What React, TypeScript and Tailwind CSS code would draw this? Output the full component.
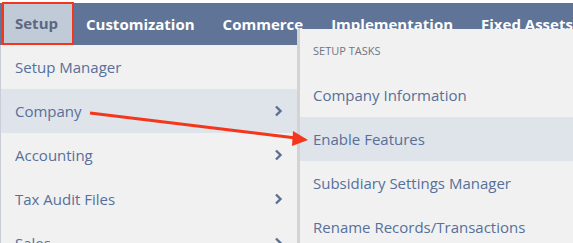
const font = { fontFamily: '"Open Sans", "Noto Sans", sans-serif' };

const NAV = ["Customization", "Commerce", "Implementation", "Fixed Assets"];
const LEFT = [
  { label: "Setup Manager", sub: false },
  { label: "Company", sub: true, active: true },
  { label: "Accounting", sub: true },
  { label: "Tax Audit Files", sub: true },
  { label: "Sales", sub: true },
];
const RIGHT = [
  { label: "Company Information" },
  { label: "Enable Features", active: true },
  { label: "Subsidiary Settings Manager" },
  { label: "Rename Records/Transactions" },
];

function Chevron() {
  return (
    <svg width="9" height="12" viewBox="0 0 9 12" className="flex-none">
      <polyline points="2,1.5 6.5,6 2,10.5" fill="none" stroke="#5b6f93" strokeWidth="2.4" />
    </svg>
  );
}

export default function App() {
  return (
    <div className="relative h-[243px] w-[573px] overflow-hidden bg-white" style={font}>
      {/* barra superior */}
      <div className="mt-[3px] flex h-[42px] items-stretch bg-[#5f7497]">
        <div className="ml-[2px] -mt-[1px] flex w-[72px] items-center border-2 border-[#f4361c] bg-[#c1cad7] pl-[11px] text-[15px] font-bold text-[#5c6781]">
          Setup
        </div>
        <div className="flex items-center gap-[28px] pl-[12px] text-[15px] font-bold text-white">
          {NAV.map((n) => (
            <span key={n} className="whitespace-nowrap">{n}</span>
          ))}
        </div>
      </div>

      {/* menú izquierdo */}
      <div className="flex w-[297px] flex-col border-l border-[#c9ced6] bg-[#f1f1f1]">
        {LEFT.map((it) => (
          <div
            key={it.label}
            className={`flex h-[44px] flex-none items-center justify-between pl-[14px] pr-[14px] text-[15px] text-[#56709a] ${
              it.active ? "bg-[#dfe3ea]" : ""
            }`}
          >
            <span>{it.label}</span>
            {it.sub && <Chevron />}
          </div>
        ))}
      </div>

      {/* submenú */}
      <div className="absolute left-[297px] top-[29px] w-[290px] border-l-[3px] border-[#d3d3d3] bg-[#f1f1f1]">
        <div className="flex h-[44px] items-center pl-[13px] text-[11px] uppercase text-[#6e7582]">
          Setup Tasks
        </div>
        {RIGHT.map((it) => (
          <div
            key={it.label}
            className={`flex h-[44px] items-center pl-[13px] text-[15px] text-[#56709a] ${
              it.active ? "bg-[#dfe3ea]" : ""
            }`}
          >
            {it.label}
          </div>
        ))}
      </div>

      {/* flecha */}
      <svg className="pointer-events-none absolute left-0 top-0" width="573" height="243">
        <line x1="90" y1="113" x2="296" y2="138" stroke="#f4361c" strokeWidth="3" />
        <polygon points="308,140 293,131 292,146" fill="#f4361c" />
      </svg>
    </div>
  );
}
